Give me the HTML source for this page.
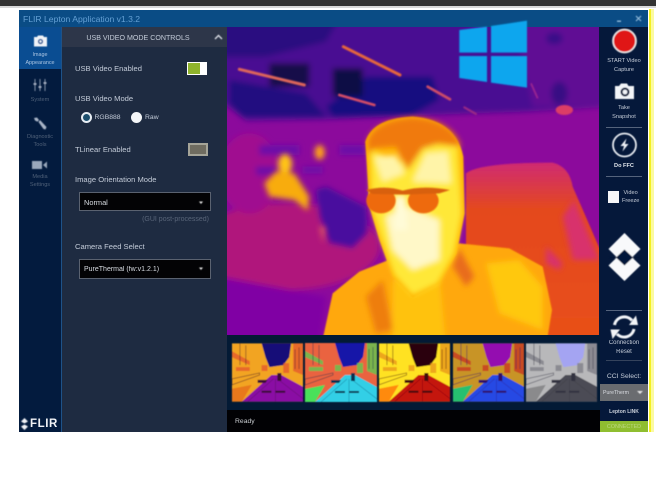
<!DOCTYPE html>
<html><head><meta charset="utf-8"><style>
html,body{margin:0;padding:0;background:#fff}
body{width:656px;height:482px;position:relative;overflow:hidden;font-family:"Liberation Sans",sans-serif}
div{position:absolute;box-sizing:border-box}
.t{line-height:10px;white-space:nowrap;color:#c3cbd8;font-size:7.6px;filter:blur(.35px)}
.c{text-align:center}
.s{font-size:5.6px;color:#4f6078}
.r{font-size:5.6px;color:#c5ccd8}
.sep{left:606px;width:36px;height:1px;background:#55637c}
svg{position:absolute;left:0;top:0}
</style></head><body>
<div style="left:0;top:0;width:656px;height:6px;background:#333"></div>
<div style="left:0;top:6px;width:656px;height:2px;background:#d8d8d8"></div>
<div style="left:649px;top:9px;width:2px;height:423px;background:#f4f020"></div>
<div style="left:651px;top:9px;width:3px;height:423px;background:#fbfaa0"></div>
<div style="left:19px;top:10px;width:629px;height:17px;background:#0a4c85"></div>
<div class="t" style="left:23px;top:14px;font-size:8.600px;color:#64a0d4">FLIR Lepton Application v1.3.2</div>
<div style="left:19px;top:27px;width:43px;height:405px;background:#031b3e"></div>
<div style="left:19px;top:27px;width:42px;height:42px;background:#0a4d92"></div>
<div style="left:61px;top:27px;width:1px;height:405px;background:#1e5288"></div>
<div style="left:62px;top:27px;width:165px;height:405px;background:#1e2b41"></div>
<div style="left:62px;top:27px;width:165px;height:20px;background:#2d3649"></div>
<div class="t c" style="left:62px;width:152px;top:33px;font-size:7.100px">USB VIDEO MODE CONTROLS</div>
<div class="t" style="left:75px;top:64px">USB Video Enabled</div>
<div style="left:187px;top:62px;width:20px;height:13px;background:#fff"></div>
<div style="left:188px;top:63px;width:12px;height:11px;background:#8fb32c"></div>
<div class="t" style="left:75px;top:94px">USB Video Mode</div>
<div style="left:81px;top:112px;width:11px;height:11px;border-radius:50%;background:#1c4f6e;border:2.500px solid #e8eef4"></div>
<div class="t" style="left:94.500px;top:113px;font-size:6.800px">RGB888</div>
<div style="left:131px;top:112px;width:11px;height:11px;border-radius:50%;background:#f4f6f8"></div>
<div class="t" style="left:145px;top:113px;font-size:6.800px">Raw</div>
<div class="t" style="left:75px;top:145px">TLinear Enabled</div>
<div style="left:188px;top:143px;width:20px;height:13px;background:#6f6c60;border:2px solid #a5a498"></div>
<div class="t" style="left:75px;top:175px">Image Orientation Mode</div>
<div style="left:79px;top:192px;width:132px;height:19px;background:#030305;border:1px solid #5a6270"></div>
<div class="t" style="left:84px;top:197.500px;font-size:7.400px;color:#d8dce2">Normal</div>
<div class="t" style="left:130px;width:79px;text-align:right;top:215px;font-size:7px;color:#596579">(GUI post-processed)</div>
<div class="t" style="left:75px;top:241.500px">Camera Feed Select</div>
<div style="left:79px;top:259px;width:132px;height:20px;background:#030305;border:1px solid #5a6270"></div>
<div class="t" style="left:84px;top:265px;font-size:7px;color:#d8dce2">PureThermal (fw:v1.2.1)</div>

<div style="left:227px;top:27px;width:373px;height:308px;background:#05183a"></div>
<div style="left:227px;top:335px;width:373px;height:75px;background:#031a35"></div>
<div style="left:227px;top:410px;width:373px;height:22px;background:#010104"></div>
<div class="t" style="left:235px;top:417px;font-size:6.800px;color:#c8ccd0">Ready</div>

<div style="left:600px;top:27px;width:48px;height:405px;background:#05183a"></div>
<div class="t c r" style="left:600px;width:48px;top:56px">START Video</div>
<div class="t c r" style="left:600px;width:48px;top:65px">Capture</div>
<div class="t c r" style="left:600px;width:48px;top:103px">Take</div>
<div class="t c r" style="left:600px;width:48px;top:112px">Snapshot</div>
<div class="sep" style="top:127px"></div>
<div class="t c r" style="left:600px;width:48px;top:161px;font-weight:bold;color:#e0e4ea">Do FFC</div>
<div class="sep" style="top:176px"></div>
<div style="left:608px;top:191px;width:11px;height:12px;background:#f6f6f8"></div>
<div class="t r" style="left:622px;top:188px;width:24px">&nbsp;Video</div>
<div class="t r" style="left:622px;top:196px">Freeze</div>
<div class="sep" style="top:310px"></div>
<div class="t c r" style="left:600px;width:48px;top:338px;font-size:6px">Connection</div>
<div class="t c r" style="left:600px;width:48px;top:347px;font-size:6px">Reset</div>
<div class="sep" style="top:360px;background:#35435c"></div>
<div class="t c r" style="left:600px;width:48px;top:372px;font-size:6.800px">CCI Select:</div>
<div style="left:600px;top:384px;width:48px;height:17px;background:#6a6c70"></div>
<div class="t" style="left:603px;top:388px;font-size:5.200px;color:#d8dae0">PureTherm</div>
<div class="t c" style="left:600px;width:48px;top:407px;font-size:5px;font-weight:bold;color:#ccd2dc">Lepton LINK</div>
<div style="left:600px;top:421px;width:48px;height:11px;background:#8fbe30"></div>
<div class="t c" style="left:600px;width:48px;top:421.500px;font-size:5.400px;color:#bcd882">CONNECTED</div>

<div class="t c" style="left:19px;width:42px;top:50px;font-size:5.400px;color:#a9c4e2">Image</div>
<div class="t c" style="left:19px;width:42px;top:58px;font-size:5.400px;color:#a9c4e2">Appearance</div>
<div class="t c s" style="left:19px;width:42px;top:95px">System</div>
<div class="t c s" style="left:19px;width:42px;top:132px">Diagnostic</div>
<div class="t c s" style="left:19px;width:42px;top:140px">Tools</div>
<div class="t c s" style="left:19px;width:42px;top:172px">Media</div>
<div class="t c s" style="left:19px;width:42px;top:180px">Settings</div>
<div class="t" style="left:30px;top:419px;font-size:11.500px;font-weight:bold;color:#f0f2f6;letter-spacing:.6px">FLIR</div>

<svg width="656" height="482" viewBox="0 0 656 482">
<defs>
<filter id="b" x="-10%" y="-10%" width="120%" height="120%"><feGaussianBlur stdDeviation="9"/></filter>
<filter id="b4" x="-10%" y="-10%" width="120%" height="120%"><feGaussianBlur stdDeviation="2.500"/></filter>
<filter id="b2" x="-10%" y="-10%" width="120%" height="120%"><feGaussianBlur stdDeviation=".5"/></filter>
<filter id="b3" x="-5%" y="-5%" width="110%" height="110%"><feGaussianBlur stdDeviation=".55"/></filter>
<linearGradient id="ch" x1="0" y1="0" x2="0" y2="1"><stop offset="0" stop-color="#cf2a72"/><stop offset=".25" stop-color="#e4481e"/><stop offset="1" stop-color="#e85018"/></linearGradient>
<clipPath id="th"><rect x="3" y="81" width="1116" height="924"/></clipPath>
<symbol id="thumb" viewBox="0 0 72 59">
<rect width="72" height="59" style="fill:var(--b)"/>
<path d="M30 0H60L58 14 52 22 38 24 34 14Z" style="fill:var(--s)"/>
<path d="M10 59L40 32 50 32 72 44V59Z" style="fill:var(--r)"/>
<path d="M0 59V46L20 42 10 59Z" style="fill:var(--g)"/>
<path d="M62 0H72V32L62 28ZM0 8L18 18 18 22 0 14ZM4 24H18V28H4ZM52 20H58V30H52ZM30 22H36V28H30Z" style="fill:var(--d)" opacity=".8"/>
<path d="M26 37H36L34 40H26ZM46 30H50V38H46ZM30 48H40V50H30ZM44 48H54V50H44Z" style="fill:var(--k)"/>
<path d="M0 36L28 30 28 32 0 42ZM8 0V22M14 2V22M64 6V26M68 4V26" style="stroke:var(--k);fill:none" stroke-width=".8" opacity=".55"/>
<path d="M42 36L16 59M46 36L72 56M44 36V59" style="stroke:var(--k);fill:none" stroke-width=".7" opacity=".35"/>
</symbol>
</defs>

<g transform="translate(226 0) scale(.33333)">
<g clip-path="url(#th)">
<rect x="0" y="70" width="1130" height="950" fill="#8c0a9c"/>
<g filter="url(#b)">
<ellipse cx="180" cy="740" rx="280" ry="130" fill="#b0127c"/>
<ellipse cx="70" cy="520" rx="90" ry="120" fill="#a01090"/>
<path d="M-20 830L300 890 280 1040H-20Z" fill="#8006a4"/>
<path d="M-20 40H1150V320L900 335 600 345 300 358 60 362 -20 300Z" fill="#4a0a92"/>
<path d="M860 40H1150V320L920 320Z" fill="#600a94"/>
<path d="M-20 40H350L300 125 120 170 -20 170Z" fill="#2c0a80"/>
<path d="M10 240L240 280 300 350 50 350 10 310Z" fill="#220a80"/>
<rect x="130" y="190" width="120" height="70" fill="#120848"/>
<path d="M420 230H620L640 300 560 345 320 350 300 320Z" fill="#180a80"/>
<rect x="320" y="205" width="90" height="85" fill="#0c0844"/>
<ellipse cx="1000" cy="280" rx="25" ry="35" fill="#380a84"/>
<ellipse cx="985" cy="115" rx="25" ry="18" fill="#380a88"/>
<path d="M100 435H220V465H100ZM90 500H150V525H90ZM340 435H420V465H340ZM230 500H290V520H230Z" fill="#6c0ea8"/>
<path d="M270 570L300 560 420 620 425 700 380 745 310 730 280 650Z" fill="#4a0a9e"/>
</g>
<g filter="url(#b4)">
<path d="M720 520Q760 488 980 488 1030 500 1040 560L1140 790V1040H950L720 740Z" fill="url(#ch)"/>
</g>
<g filter="url(#b)">
<path d="M1045 600L1120 780 1040 780 1010 650Z" fill="#d8306c"/>
<path d="M960 740L1010 790 1000 810 960 790Z" fill="#d8306c"/>
<ellipse cx="177" cy="492" rx="21" ry="30" fill="#ffc414"/>
<path d="M115 550L150 515 205 520 250 590 245 632 205 600 130 590Z" fill="#f8ac0c"/>
<ellipse cx="281" cy="457" rx="15" ry="22" fill="#ffa414"/>
<path d="M280 680L298 680 292 730Z" fill="#e05860"/>
</g>
<g filter="url(#b4)">
<path d="M285 1040L320 880 400 815 500 775 700 730 850 745 950 800 978 930 960 1040Z" fill="#ffa808"/>
</g>
<g filter="url(#b)">
<path d="M780 790L880 780 950 860 950 990 820 940Z" fill="#ffc810"/>
<path d="M420 890L470 840 500 990 450 1000Z" fill="#ee7e10"/>
<path d="M700 745L745 830 720 860 680 800Z" fill="#e86c1c"/>
<path d="M530 930H590L580 1040H540Z" fill="#f08010"/>
<path d="M500 840L640 820 660 1040H500Z" fill="#ffc210"/>
</g>
<g filter="url(#b4)">
<path d="M418 425Q440 355 560 350 690 360 712 470L716 640 692 760 640 850 560 892 500 830 460 720 430 620Z" fill="#ffb404"/>
</g>
<g filter="url(#b)">
<path d="M432 450L540 490 600 430 695 440 708 640 685 760 635 850 560 885 505 825 465 715 436 620Z" fill="#ffe838"/>
<path d="M425 420Q450 360 560 352 680 360 705 440L640 430 590 445 545 510 510 440 440 445 428 470Z" fill="#f07a10"/>
<path d="M445 470L510 465 535 520 470 545ZM600 460L665 455 675 550 560 545Z" fill="#fff4a8"/>
<path d="M480 650L540 620 640 660 640 780 560 810 500 750Z" fill="#fff8c8"/>
<path d="M510 590L535 590 545 690 505 690Z" fill="#fffbd8"/>
</g>
<g filter="url(#b4)">
<path d="M40 208L235 255" stroke="#e0665a" stroke-width="9" stroke-linecap="round"/>
<path d="M352 140L522 225" stroke="#e8683a" stroke-width="9" stroke-linecap="round"/>
<path d="M340 285L445 315" stroke="#d84e66" stroke-width="8" stroke-linecap="round"/>
<path d="M605 260L672 298" stroke="#d04e66" stroke-width="8" stroke-linecap="round"/>
<path d="M715 322L750 342" stroke="#a02a84" stroke-width="6" stroke-linecap="round"/>
<path d="M915 250L935 295" stroke="#a02890" stroke-width="5"/>
<ellipse cx="1015" cy="330" rx="26" ry="15" fill="#dc3c66"/>
<ellipse cx="465" cy="602" rx="44" ry="38" fill="#ee6a10"/>
<ellipse cx="592" cy="602" rx="46" ry="38" fill="#ee6a10"/>
<path d="M420 570Q480 555 530 572 590 555 672 570L640 580 540 584 440 582Z" fill="#d86010"/>
</g>
</g>
<path d="M700 90L783 80V158H700ZM795 78L903 62V158H795ZM700 168H783V246L700 234ZM795 168H903V263L795 248Z" fill="#0aa6ee" filter="url(#b4)"/>
</g>

<g filter="url(#b3)">
<svg x="232" y="343" width="71" height="59" style="--b:#f2a420;--s:#150a78;--r:#8a10a4;--g:#e8781c;--d:#e45a2c;--k:#3a1030"><use href="#thumb"/></svg>
<svg x="305" y="343" width="72" height="59" style="--b:#ea6440;--s:#1412a8;--r:#30cfe6;--g:#4ae05a;--d:#60c850;--k:#103050"><use href="#thumb"/></svg>
<svg x="379" y="343" width="71" height="59" style="--b:#ffe224;--s:#2c0410;--r:#c41210;--g:#ff8a10;--d:#e89818;--k:#401010"><use href="#thumb"/></svg>
<svg x="453" y="343" width="71" height="59" style="--b:#c89428;--s:#9410b0;--r:#2848e4;--g:#28c070;--d:#c83820;--k:#301068"><use href="#thumb"/></svg>
<svg x="526" y="343" width="71" height="59" style="--b:#b8b8ba;--s:#a4a4f2;--r:#4c4c54;--g:#8a8a8c;--d:#808088;--k:#303040"><use href="#thumb"/></svg>
</g>

<g filter="url(#b2)">
<path d="M215 39L218.500 35.500 222 39" fill="none" stroke="#d8dce4" stroke-width="1.400"/>
<path d="M199 201.500H203L201 204ZM199 267.500H203L201 270Z" fill="#e8e8e8"/>
<path d="M637 391H643L640 394Z" fill="#e8e8e8"/>
<rect x="617" y="20.500" width="4" height="1.400" fill="#8fb8d8"/>
<path d="M636 16L641 21M641 16L636 21" stroke="#8fb8d8" stroke-width="1.200"/>
<path d="M34 37H37L38 35.500H43L44 37H47V46.500H34Z" fill="#f0f3f8"/>
<circle cx="40.500" cy="41.500" r="2.600" fill="#0a4d92"/><circle cx="40.500" cy="41.500" r="1.200" fill="#f0f3f8"/>
<path d="M35 79V91M40 79V91M45 79V91" stroke="#8592a6" stroke-width="1"/>
<path d="M33.500 84H36.500M38.500 87H41.500M43.500 83H46.500" stroke="#aab4c4" stroke-width="1.800"/>
<path d="M34 118L37 117.500 39 120 37.500 121.800 35 120.500ZM38.500 122L40 120 46.500 127 45.500 129.500 43.500 129Z" fill="#a8b4c6"/>
<rect x="32" y="161" width="10" height="8" fill="#9aa8bc"/><path d="M43 165L47 161.500V168.500Z" fill="#9aa8bc"/>
<path d="M24.500 418L28 421.500 24.500 423.500 21 421.500ZM24.500 424.500L28 426.500 24.500 430 21 426.500Z" fill="#f0f2f6"/>
<circle cx="624.500" cy="41" r="11.500" fill="#e01212" stroke="#e6e0e0" stroke-width="1.800"/>
<path d="M615 86H619L621 83.500H627L628.500 86H634V99H615Z" fill="#f2f4f8"/>
<circle cx="625" cy="92" r="4.500" fill="#05183a"/><circle cx="625" cy="92" r="2.400" fill="#f2f4f8"/>
<circle cx="624.500" cy="145" r="11.500" fill="none" stroke="#e6eaf0" stroke-width="1.800"/>
<path d="M626.500 138.500L620.500 146H624L622.500 151.500 628.500 144H625Z" fill="#eef1f6"/>
<path d="M624.500 233L640.500 249 624.500 265 608.500 249Z" fill="#f8f9fb"/>
<path d="M624.500 250L640.500 265.500 624.500 281 608.500 265.500Z" fill="#f8f9fb"/>
<path d="M624.500 249.500L633 257.500 624.500 265.500 616 257.500Z" fill="#05183a"/>
<path d="M609 257.500H616M633 257.500H640" stroke="#05183a" stroke-width="1"/>
<path d="M614.500 325A10 10 0 0 1 632 320.500" fill="none" stroke="#f2f4f8" stroke-width="3"/>
<path d="M629 325H638L636 315.500Z" fill="#f2f4f8"/>
<path d="M634 329A10 10 0 0 1 617 334" fill="none" stroke="#f2f4f8" stroke-width="3"/>
<path d="M620 329.500H610.500L612.500 339Z" fill="#f2f4f8"/>
</g>
</svg>
</body></html>
